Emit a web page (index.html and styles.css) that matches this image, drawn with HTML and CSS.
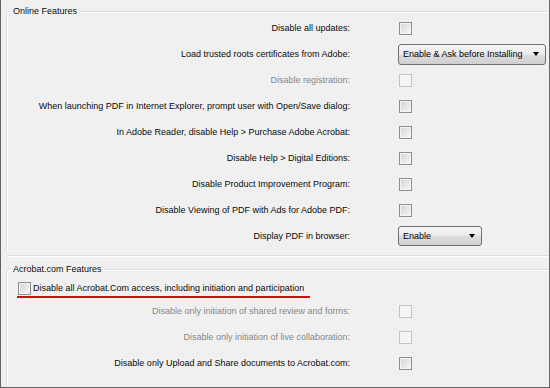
FILE: index.html
```html
<!DOCTYPE html>
<html lang="en">
  <head>
    <meta charset="UTF-8" />
    <title>Preferences</title>
    <link rel="stylesheet" href="styles.css">
  </head>
  <body>
    <div class="frame">
      <!-- Online Features -->
      <fieldset class="group group-online">
        <legend>Online Features</legend>
        <div class="rows">
          <label class="lbl">Disable all updates:</label>
          <span class="ctl"><span class="check"></span></span>

          <label class="lbl">Load trusted roots certificates from Adobe:</label>
          <span class="ctl"><span class="select select-wide">Enable &amp; Ask before Installing<i class="arrow"></i></span></span>

          <label class="lbl off">Disable registration:</label>
          <span class="ctl"><span class="check check-off"></span></span>

          <label class="lbl">When launching PDF in Internet Explorer, prompt user with Open/Save dialog:</label>
          <span class="ctl"><span class="check"></span></span>

          <label class="lbl">In Adobe Reader, disable Help &gt; Purchase Adobe Acrobat:</label>
          <span class="ctl"><span class="check"></span></span>

          <label class="lbl">Disable Help &gt; Digital Editions:</label>
          <span class="ctl"><span class="check"></span></span>

          <label class="lbl">Disable Product Improvement Program:</label>
          <span class="ctl"><span class="check"></span></span>

          <label class="lbl">Disable Viewing of PDF with Ads for Adobe PDF:</label>
          <span class="ctl"><span class="check"></span></span>

          <label class="lbl">Display PDF in browser:</label>
          <span class="ctl"><span class="select select-small">Enable<i class="arrow"></i></span></span>
        </div>
      </fieldset>

      <!-- Acrobat.com Features -->
      <fieldset class="group group-acro">
        <legend>Acrobat.com Features</legend>
        <div class="master">
          <span class="check"></span>
          <span class="master-text">Disable all Acrobat.Com access, including initiation and participation</span>
        </div>
        <div class="rows">
          <label class="lbl off">Disable only initiation of shared review and forms:</label>
          <span class="ctl"><span class="check check-off"></span></span>

          <label class="lbl off">Disable only initiation of live collaboration:</label>
          <span class="ctl"><span class="check check-off"></span></span>

          <label class="lbl">Disable only Upload and Share documents to Acrobat.com:</label>
          <span class="ctl"><span class="check"></span></span>
        </div>
      </fieldset>
    </div>
  </body>
</html>
```
FILE: styles.css
```css
* {
  margin: 0;
  padding: 0;
  box-sizing: border-box;
}

body {
  background-color: #f0f0f0;
  font-family: "Liberation Sans", Arial, sans-serif;
  font-size: 9px;
  color: #0a0a0a;
}

/* 外框 */
.frame {
  width: 550px;
  height: 388px;
  border-left: 1px solid #646464;
  border-right: 1px solid #646464;
  border-bottom: 1px solid #646464;
  overflow: hidden;
  padding-left: 5px;
}

/* 分组框 */
.group {
  border: 1px solid #d5dfe5;
  border-radius: 3px;
  box-shadow: inset 1px 1px 0 #fff, 1px 1px 0 #fff;
  margin-right: -8px;
  min-width: 0;
}

.group legend {
  margin-left: 4px;
  padding: 0 2px;
  line-height: 12px;
  height: 12px;
}

.group-online {
  margin-top: 5px;
  padding: 0 0 6px 0;
}

.group-acro {
  margin-top: 7px;
  padding: 0;
  height: 200px;
}

/* 行: 标签右对齐 + 控件 */
.rows {
  display: grid;
  grid-template-columns: 343px 1fr;
  grid-auto-rows: 26px;
  column-gap: 47px;
}

.group-online .rows {
  margin-top: -2px;
}

.lbl {
  text-align: right;
  line-height: 26px;
  white-space: nowrap;
}

.lbl.off {
  color: #878787;
}

.ctl {
  display: flex;
  align-items: center;
}

/* 复选框 */
.check {
  width: 13px;
  height: 13px;
  margin-left: 2px;
  border: 1px solid #8e8f8f;
  background: linear-gradient(135deg, #d4d4d4, #f7f7f7);
  box-shadow: inset 0 0 0 1px #f4f4f4;
}

.check-off {
  border-color: #c4c4c4;
  background: #f5f5f5;
  box-shadow: none;
}

/* 下拉框 */
.select {
  position: relative;
  height: 21px;
  line-height: 19px;
  padding-left: 4px;
  border: 1px solid #707070;
  border-radius: 3px;
  background: linear-gradient(#f4f4f4, #ebebeb 50%, #dddddd 51%, #cfcfcf);
  color: #000;
}

.select-wide {
  width: 148px;
  margin-left: 1px;
}

.select-small {
  width: 84px;
  height: 20px;
  line-height: 18px;
  margin-left: 1px;
}

.arrow {
  position: absolute;
  right: 6px;
  top: 7px;
  width: 0;
  height: 0;
  border-left: 3.5px solid transparent;
  border-right: 3.5px solid transparent;
  border-top: 4px solid #000;
}

/* 全部禁用 (红线标注) */
.master {
  display: inline-flex;
  align-items: center;
  height: 18px;
  margin: 5px 0 0 10px;
  padding: 0 6px 0 1px;
  border-bottom: 2px solid #cc1111;
  gap: 2px;
}

.master .check {
  margin-left: 0;
}
```
